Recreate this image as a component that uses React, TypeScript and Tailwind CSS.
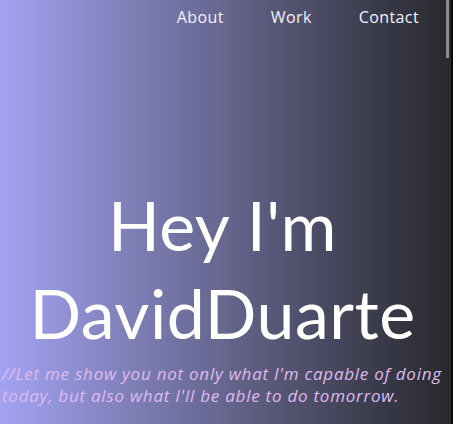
import React from "react";

export default function App() {
  return (
    <div className="flex h-screen w-full overflow-hidden bg-[#27282c]">
      <main className="flex-1 min-w-0">
        <section className="h-[424px] w-full bg-gradient-to-r from-[#a3a3f4] via-[#66668f] to-[#292a2f]">
          <nav className="flex justify-end gap-[47px] pr-[26px] pt-[5px] font-['Open_Sans',sans-serif] text-[16px] tracking-[0.4px] text-[#f2f2ff]">
            <a className="leading-[24px]">About</a>
            <a className="leading-[24px]">Work</a>
            <a className="leading-[24px]">Contact</a>
          </nav>
          <div className="flex flex-col items-center pt-[152px]">
            <h1 className="text-center font-['Lato',sans-serif] font-normal text-[68px] tracking-[0.5px] leading-[88px] text-white">
              Hey I'm
              <br />
              DavidDuarte
            </h1>
          </div>
          <p className="mt-[6px] pl-[2px] font-['Open_Sans',sans-serif] italic text-[17px] tracking-[0.75px] leading-[22px] text-[#dfbaf0] whitespace-nowrap">
            //Let me show you not only what I'm capable of doing
            <br />
            today, but also what I'll be able to do tomorrow.
          </p>
        </section>
        <section className="h-[2700px] w-full bg-[#27282c]" />
      </main>
      <div className="flex w-[8px] shrink-0 bg-[#292a2f]">
        <div className="ml-[1px] h-[58px] w-[3px] bg-[#8c8c8e]" />
        <div className="ml-auto h-full w-[2px] bg-[#0a0a0a]" />
      </div>
    </div>
  );
}
